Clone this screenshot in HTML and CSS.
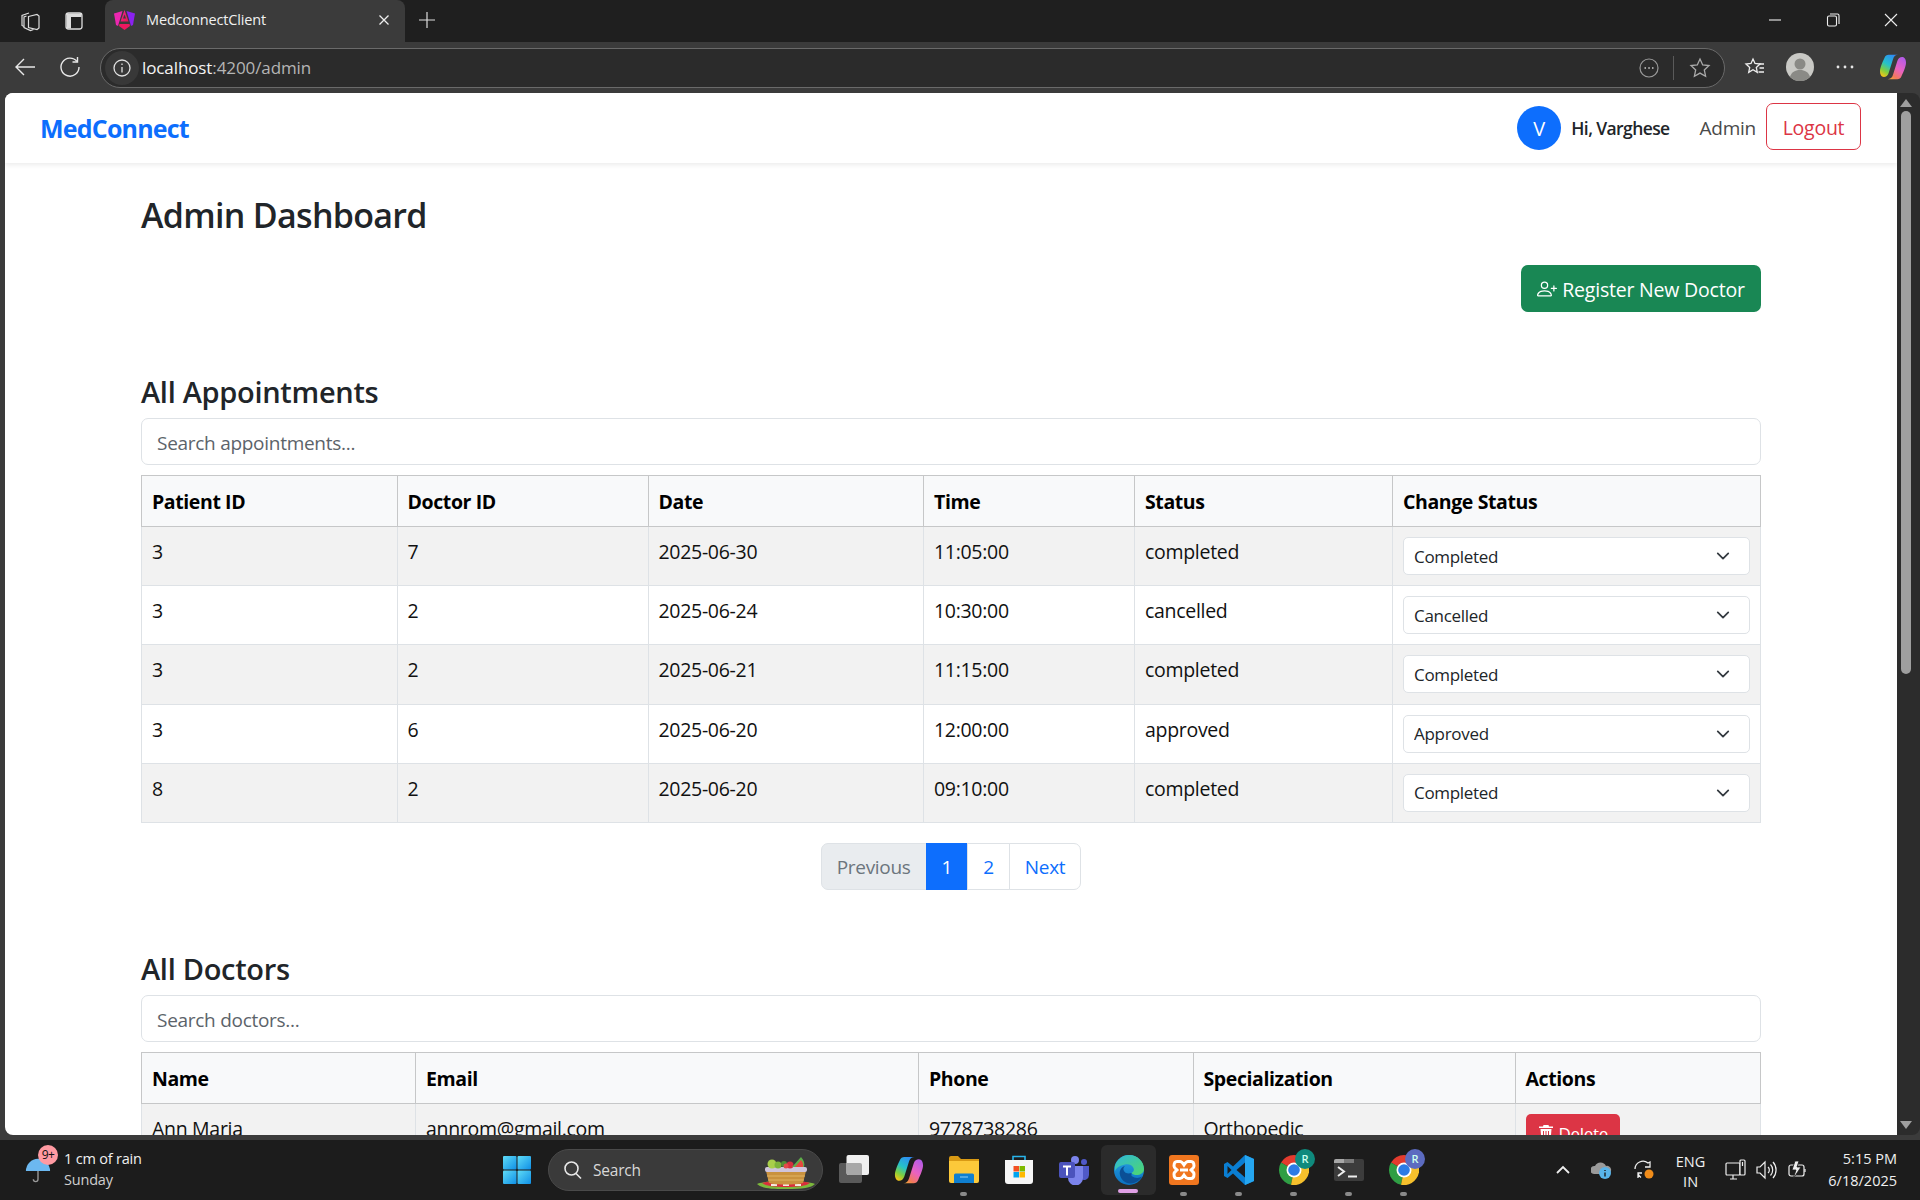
FILE: index.html
```html
<!DOCTYPE html>
<html lang="en">
<head>
<meta charset="utf-8">
<title>MedconnectClient</title>
<link rel="stylesheet" href="styles.css">
</head>
<body>
<div class="titlebar">
  <div class="tb-left">
    <svg class="ic22" viewBox="0 0 22 22" fill="none" stroke="#ddd" stroke-width="1.200"><path d="M9.500 6.500 18 4.500 20 6v12l-2 1.500-8.500-2z"/><path d="M7.500 6 5 7v10.500l6.500 3 3-1"/><path d="M10 3 3 5.500v10l2 1"/></svg>
    <svg class="ic22 vtabs" viewBox="0 0 22 22" fill="none" stroke="#ddd" stroke-width="1.300"><rect x="3" y="3" width="16" height="16" rx="2.500"/><path d="M3.500 3.500h15V7H8v11.500H3.500z" fill="#ddd" stroke="none"/></svg>
  </div>
  <div class="tab">
    <svg class="fav" viewBox="0 0 21 21"><defs><linearGradient id="ang" x1="0" y1="0" x2="1" y2="1"><stop offset="0" stop-color="#f0259a"/><stop offset="1" stop-color="#e8174f"/></linearGradient></defs><path d="M8.500 2 0 4.500 2 16 4 17z" fill="#ec27b0"/><path d="M12.500 2 21 4.500 19 16 17 17z" fill="#8a22f0"/><path d="M10.500 1 14.500 12.500H6.500z" fill="url(#ang)"/><path d="M10.500 5.500 12 9.500H9z" fill="#3b3b3b"/><path d="M5.500 15h10l.5 2-5.500 4-5.500-4z" fill="#ee1860"/></svg>
    <span class="tab-title">MedconnectClient</span>
    <svg class="tab-x" viewBox="0 0 12 12" stroke="#eee" stroke-width="1.300"><path d="M1.500 1.500l9 9M10.500 1.500l-9 9"/></svg>
  </div>
  <svg class="plus" viewBox="0 0 18 18" stroke="#ddd" stroke-width="1.200"><path d="M9 1v16M1 9h16"/></svg>
  <div class="winctl">
    <svg class="ic-win" viewBox="0 0 14 14" stroke="#eee" stroke-width="1.100"><path d="M1 7h12"/></svg>
    <svg class="ic-win" viewBox="0 0 14 14" fill="none" stroke="#eee" stroke-width="1.100"><rect x="1.500" y="3" width="9" height="10" rx="1.500"/><path d="M4 1h7.500a1.500 1.500 0 0 1 1.500 1.500V11"/></svg>
    <svg class="ic-win" viewBox="0 0 14 14" stroke="#eee" stroke-width="1.100"><path d="M1 1l12 12M13 1L1 13"/></svg>
  </div>
</div>

<div class="toolbar">
  <svg class="tool first" viewBox="0 0 22 22" fill="none" stroke="#e8e8e8" stroke-width="1.400"><path d="M21 11H2M10 3l-8 8 8 8"/></svg>
  <svg class="tool" viewBox="0 0 22 22" fill="none" stroke="#e8e8e8" stroke-width="1.400"><path d="M18 5.500A9 9 0 1 0 20 11"/><path d="M18.500 1v5h-5"/></svg>
  <div class="omnibox">
    <span class="info-wrap"><svg class="ic20" viewBox="0 0 20 20" fill="none" stroke="#e0e0e0" stroke-width="1.300"><circle cx="10" cy="10" r="8"/><path d="M10 9v5.500M10 5.500v1.500"/></svg></span>
    <span class="url"><span class="url-host">localhost</span>:4200/admin</span>
    <svg class="ic20 omni-more" viewBox="0 0 20 20" fill="none" stroke="#999" stroke-width="1.200"><circle cx="10" cy="10" r="9"/><path d="M5.500 10h1.500M9.300 10h1.500M13 10h1.500" stroke="#ccc" stroke-width="1.500"/></svg>
    <span class="omni-sep"></span>
    <svg class="ic22" viewBox="0 0 22 22" fill="none" stroke="#aaa" stroke-width="1.300"><path d="M11 2l2.700 5.900 6.300.7-4.700 4.300 1.300 6.300L11 16.100l-5.600 3.100 1.300-6.300L2 8.600l6.300-.7z"/></svg>
  </div>
  <svg class="ic22 fav-list" viewBox="0 0 22 22" fill="none" stroke="#eee" stroke-width="1.300"><path d="M9 3l2 4.500 5 .5-3.700 3.400 1 5L9 13.800 4.700 16.400l1-5L2 8l5-.5z"/><path d="M15 8h5M15.500 12h4.500M14.500 16h5.500"/></svg>
  <svg class="profile" viewBox="0 0 28 28"><circle cx="14" cy="14" r="14" fill="#c9c9c5"/><circle cx="14" cy="11" r="5.500" fill="#8a8a86"/><path d="M4 24c1.500-5 5-7 10-7s8.500 2 10 7a14 14 0 0 1-20 0z" fill="#8a8a86"/></svg>
  <svg class="dots" viewBox="0 0 18 4" fill="#e6e6e6"><circle cx="2" cy="2" r="1.400"/><circle cx="9" cy="2" r="1.400"/><circle cx="16" cy="2" r="1.400"/></svg>
  <svg class="copilot" viewBox="0 0 30 32"><defs><linearGradient id="cpa" x1="0.700" y1="0" x2="0.200" y2="1"><stop offset="0" stop-color="#2f8cf5"/><stop offset=".45" stop-color="#25c2c9"/><stop offset=".75" stop-color="#7fcf3f"/><stop offset="1" stop-color="#f5c518"/></linearGradient><linearGradient id="cpb" x1="0.800" y1="0" x2="0.200" y2="1"><stop offset="0" stop-color="#b25be8"/><stop offset=".5" stop-color="#ea62c0"/><stop offset=".85" stop-color="#f2795a"/><stop offset="1" stop-color="#f0a040"/></linearGradient></defs><path d="M10 2h11c-3 0-5 1.500-6 5L10 23c-1 3-3 4.500-5.500 4.500C1.500 27.500 0 24.500 0 21c0-4 3-11 5-15 1-3 3-4 5-4z" fill="url(#cpa)"/><path d="M20 30H9c3 0 5-1.500 6-5l5-16c1-3 3-4.500 5.500-4.500 3 0 4.500 3 4.500 6.500 0 4-3 11-5 15-1 3-3 4-5 4z" fill="url(#cpb)"/></svg>
</div>

<div class="viewport">
  <div class="page">
    <nav class="navbar">
      <a class="brand">MedConnect</a>
      <div class="nav-right">
        <span class="avatar">V</span>
        <span class="hi">Hi, Varghese</span>
        <span class="role">Admin</span>
        <button class="logout">Logout</button>
      </div>
    </nav>
    <main class="container">
      <h2 class="page-title">Admin Dashboard</h2>
      <div class="actions">
        <button class="btn-green">
          <svg class="person" viewBox="0 0 16 16" fill="currentColor"><path d="M6 8a3 3 0 1 0 0-6 3 3 0 0 0 0 6m2-3a2 2 0 1 1-4 0 2 2 0 0 1 4 0m4 8c0 1-1 1-1 1H1s-1 0-1-1 1-4 6-4 6 3 6 4m-1-.004c-.001-.246-.154-.986-.832-1.664C9.516 10.680 8.289 10 6 10s-3.516.68-4.168 1.332c-.678.678-.83 1.418-.832 1.664z"/><path fill-rule="evenodd" d="M13.500 5a.5.5 0 0 1 .5.5V7h1.500a.5.5 0 0 1 0 1H14v1.500a.5.5 0 0 1-1 0V8h-1.500a.5.5 0 0 1 0-1H13V5.500a.5.5 0 0 1 .5-.5"/></svg>
          Register New Doctor
        </button>
      </div>

      <section class="sec-appts">
        <h3 class="sec-title">All Appointments</h3>
        <input class="search" type="text" placeholder="Search appointments...">
        <table class="tbl">
          <colgroup><col class="a1"><col class="a2"><col class="a3"><col class="a4"><col class="a5"><col class="a6"></colgroup>
          <thead><tr><th>Patient ID</th><th>Doctor ID</th><th>Date</th><th>Time</th><th>Status</th><th>Change Status</th></tr></thead>
          <tbody>
            <tr><td>3</td><td>7</td><td>2025-06-30</td><td>11:05:00</td><td>completed</td><td><select class="sel"><option>Completed</option><option>Cancelled</option><option>Approved</option></select></td></tr>
            <tr><td>3</td><td>2</td><td>2025-06-24</td><td>10:30:00</td><td>cancelled</td><td><select class="sel"><option>Cancelled</option><option>Completed</option><option>Approved</option></select></td></tr>
            <tr><td>3</td><td>2</td><td>2025-06-21</td><td>11:15:00</td><td>completed</td><td><select class="sel"><option>Completed</option><option>Cancelled</option><option>Approved</option></select></td></tr>
            <tr><td>3</td><td>6</td><td>2025-06-20</td><td>12:00:00</td><td>approved</td><td><select class="sel"><option>Approved</option><option>Completed</option><option>Cancelled</option></select></td></tr>
            <tr><td>8</td><td>2</td><td>2025-06-20</td><td>09:10:00</td><td>completed</td><td><select class="sel"><option>Completed</option><option>Cancelled</option><option>Approved</option></select></td></tr>
          </tbody>
        </table>
        <ul class="pager">
          <li class="pg disabled">Previous</li>
          <li class="pg active">1</li>
          <li class="pg">2</li>
          <li class="pg">Next</li>
        </ul>
      </section>

      <section class="sec-docs">
        <h3 class="sec-title">All Doctors</h3>
        <input class="search" type="text" placeholder="Search doctors...">
        <table class="tbl">
          <colgroup><col class="d1"><col class="d2"><col class="d3"><col class="d4"><col class="d5"></colgroup>
          <thead><tr><th>Name</th><th>Email</th><th>Phone</th><th>Specialization</th><th>Actions</th></tr></thead>
          <tbody>
            <tr><td>Ann Maria</td><td>annrom@gmail.com</td><td>9778738286</td><td>Orthopedic</td><td><button class="btn-del"><svg class="trash" viewBox="0 0 16 16" fill="currentColor"><path d="M5.500 0h5l.5 1.500h4V3H1V1.500h4zM2.500 4h11l-1 12h-9zM5 6v8h1V6zm2.500 0v8h1V6zM10 6v8h1V6z"/></svg> Delete</button></td></tr>
          </tbody>
        </table>
      </section>
    </main>
  </div>
  <div class="scrollbar">
    <span class="sb-up"></span>
    <span class="sb-thumb"></span>
    <span class="sb-down"></span>
  </div>
</div>

<footer class="taskbar">
  <div class="weather">
    <svg class="umbrella" viewBox="0 0 28 30"><path d="M1 16a13 13 0 0 1 26 0z" fill="#6cb8f0"/><path d="M14 16v9a2.500 2.500 0 0 1-5 0" fill="none" stroke="#999" stroke-width="1.500"/></svg>
    <span class="badge">9+</span>
    <div class="weather-text"><span>1 cm of rain</span><span class="w-sub">Sunday</span></div>
  </div>
  <svg class="start" viewBox="0 0 28 28"><defs><linearGradient id="win" x1="0" y1="0" x2="1" y2="1"><stop offset="0" stop-color="#5fdcf7"/><stop offset="1" stop-color="#0f8fe6"/></linearGradient></defs><rect x="0" y="0" width="13.500" height="13.500" rx="1" fill="url(#win)"/><rect x="14.500" y="0" width="13.500" height="13.500" rx="1" fill="url(#win)"/><rect x="0" y="14.500" width="13.500" height="13.500" rx="1" fill="url(#win)"/><rect x="14.500" y="14.500" width="13.500" height="13.500" rx="1" fill="url(#win)"/></svg>
  <div class="tb-search">
    <svg class="ic20" viewBox="0 0 20 20" fill="none" stroke="#e8e8e8" stroke-width="1.600"><circle cx="8.500" cy="8.500" r="6.500"/><path d="M13 13.500l5 5"/></svg>
    <span class="tb-search-text">Search</span>
    <svg class="basket" viewBox="0 0 58 32"><path d="M0 27c6-4 50-4 58 0-4 4-12 5-29 5S4 31 0 27z" fill="#7cb83c"/><path d="M5 26c8-3 40-3 48 0-4 3-12 4-24 4S9 29 5 26z" fill="#d82f3c"/><path d="M14 27h6v2h-6zM26 27h6v2h-6zM38 27h6v2h-6z" fill="#f6e6e0"/><path d="M9 14h40l-3 12c-6 2-28 2-34 0z" fill="#c9923f"/><path d="M10 19h38M11 23h36" stroke="#e2b565" stroke-width="1"/><rect x="8" y="10" width="42" height="5" rx="2" fill="#cfc4dc"/><circle cx="15" cy="7" r="4.500" fill="#a9cf4a"/><circle cx="21" cy="8" r="3.500" fill="#7db33a"/><circle cx="27" cy="7" r="3" fill="#4f8f36"/><circle cx="33" cy="8" r="3.500" fill="#d5303f"/><circle cx="29" cy="9" r="2.500" fill="#e24a4a"/><path d="M35 10 44 0c3 3 4 7 3 10z" fill="#5fae4a"/><path d="M38 10 44 3c2 2 2.500 5 2 7z" fill="#e4483e"/></svg>
  </div>
  <div class="apps">
    <span class="app"><svg class="ai" viewBox="0 0 30 30"><rect x="0" y="8" width="23" height="20" rx="2" fill="#5a5a5a"/><rect x="7.500" y="0" width="22.500" height="20" rx="2" fill="#f0f0f0"/><path d="M7.500 8H21a2 2 0 0 1 2 2v10H9.500a2 2 0 0 1-2-2z" fill="#a8a8a8"/></svg></span>
    <span class="app"><svg class="ai" viewBox="0 0 30 32"><defs><linearGradient id="cpc" x1="0.700" y1="0" x2="0.200" y2="1"><stop offset="0" stop-color="#2f8cf5"/><stop offset=".45" stop-color="#25c2c9"/><stop offset=".75" stop-color="#7fcf3f"/><stop offset="1" stop-color="#f5c518"/></linearGradient><linearGradient id="cpd" x1="0.800" y1="0" x2="0.200" y2="1"><stop offset="0" stop-color="#b25be8"/><stop offset=".5" stop-color="#ea62c0"/><stop offset=".85" stop-color="#f2795a"/><stop offset="1" stop-color="#f0a040"/></linearGradient></defs><path d="M10 2h11c-3 0-5 1.500-6 5L10 23c-1 3-3 4.500-5.500 4.500C1.500 27.500 0 24.500 0 21c0-4 3-11 5-15 1-3 3-4 5-4z" fill="url(#cpc)"/><path d="M20 30H9c3 0 5-1.500 6-5l5-16c1-3 3-4.500 5.500-4.500 3 0 4.500 3 4.500 6.500 0 4-3 11-5 15-1 3-3 4-5 4z" fill="url(#cpd)"/></svg></span>
    <span class="app running"><svg class="ai" viewBox="0 0 30 30"><path d="M0 3a2 2 0 0 1 2-2h7l3 3h18v6H0z" fill="#d99a14"/><path d="M0 6h30v20a2 2 0 0 1-2 2H2a2 2 0 0 1-2-2z" fill="#fcc93a"/><path d="M5 20a1.500 1.500 0 0 1 1.500-1.500h17A1.500 1.500 0 0 1 25 20v8H5z" fill="#0f7fd0"/><path d="M11 22h8" stroke="#8fd0f5" stroke-width="1"/></svg></span>
    <span class="app"><svg class="ai" viewBox="0 0 30 30"><path d="M9 6V1.500h12V6" fill="none" stroke="#28b4ea" stroke-width="1.600"/><path d="M1 5h28v21a3 3 0 0 1-3 3H4a3 3 0 0 1-3-3z" fill="#f6f6f6"/><rect x="9.500" y="11" width="5.500" height="5.500" fill="#f25022"/><rect x="15.500" y="11" width="5.500" height="5.500" fill="#7fba00"/><rect x="9.500" y="17" width="5.500" height="5.500" fill="#00a4ef"/><rect x="15.500" y="17" width="5.500" height="5.500" fill="#ffb900"/></svg></span>
    <span class="app"><svg class="ai" viewBox="0 0 30 30"><circle cx="16" cy="5" r="4" fill="#7b83eb"/><circle cx="25" cy="7" r="3" fill="#5059c9"/><path d="M20 11h10v9a5 5 0 0 1-8 4z" fill="#5059c9"/><path d="M9 11h15v12a7.500 7.500 0 0 1-15 0z" fill="#7b83eb"/><rect x="0" y="7" width="16" height="16" rx="2" fill="#4b53bc"/><path d="M4 10.500h8v2H9v8H7v-8H4z" fill="#fff"/></svg></span>
    <span class="app edge"><svg class="ai" viewBox="0 0 30 30"><defs><linearGradient id="edg" x1="0" y1="0" x2="1" y2="1"><stop offset="0" stop-color="#2fb8d8"/><stop offset="1" stop-color="#4fd86c"/></linearGradient><linearGradient id="edb" x1="0" y1="0" x2="0" y2="1"><stop offset="0" stop-color="#2aa5e5"/><stop offset="1" stop-color="#0a70c0"/></linearGradient></defs><circle cx="15" cy="15" r="15" fill="url(#edb)"/><path d="M1 11C3 4 9 0 15 0c9 0 15 7 15 14 0 4-4 6-7.500 6-2 0-4-.5-5-2 2-1 3-3 2-5-1-3-5-4.500-8.500-3.500C6 10.500 3 12 1 16z" fill="url(#edg)"/><path d="M17.500 18c-3 1-7 .5-8-3-.5-1.500.5-3 1.500-4-4 1-6 5-5 9 1 5 6 9 11 8.500 5-.5 9-3 11-7-3 2-7 2-10.500-.5z" fill="#0b4f96"/></svg><i class="edge-bar"></i></span>
    <span class="app running"><svg class="ai" viewBox="0 0 30 30"><rect x="0" y="0" width="30" height="30" rx="3" fill="#f0761f"/><path d="M8 6.500h3c2 0 3 2 4 3.500 1-1.500 2-3.500 4-3.500h3c2.500 0 3 2.500 3 4.500s-2 3-3 4c1 1 3 2 3 4s-.5 4.500-3 4.500h-3c-2 0-3-2-4-3.500-1 1.500-2 3.500-4 3.500H8c-2.500 0-3-2.500-3-4.500s2-3 3-4c-1-1-3-2-3-4s.5-4.500 3-4.500z" fill="none" stroke="#fff" stroke-width="3"/><path d="M11 15h8" stroke="#fff" stroke-width="3"/></svg></span>
    <span class="app running"><svg class="ai" viewBox="0 0 30 30"><path d="M21 0l9 4v22l-9 4L9 18.500 3.500 23 0 21V9l3.500-2L9 11.500z" fill="#0a7ed2"/><path d="M21 0l9 4v22l-9 4z" fill="#25a6f0"/><path d="M21 7.500 12.500 15l8.500 7.500z" fill="#1c1c1c"/><path d="M3.500 11v8l4-4z" fill="#1c1c1c"/></svg></span>
    <span class="app running"><svg class="ai" viewBox="0 0 30 30"><path d="M15 15 2.010 7.500A15 15 0 0 1 27.990 7.500z" fill="#e33b2e"/><path d="M15 15 12 29.700A15 15 0 0 1 2.010 7.500z" fill="#2f9e44"/><path d="M15 15 27.990 7.500A15 15 0 0 1 12 29.700z" fill="#f6c02c"/><circle cx="15" cy="15" r="7.500" fill="#fff"/><circle cx="15" cy="15" r="5.800" fill="#2c7be5"/></svg><span class="mini teal">R</span></span>
    <span class="app running"><svg class="ai" viewBox="0 0 30 30"><rect x="0" y="4" width="30" height="22" rx="2" fill="#3c3c3c"/><path d="M0 6a2 2 0 0 1 2-2h8v4H0z" fill="#a8a8a8"/><path d="M10 4h10v4H10z" fill="#7a7a7a"/><path d="M4 12l6 4.500-6 4.500" fill="none" stroke="#eee" stroke-width="2"/><path d="M14 21.500h9" stroke="#eee" stroke-width="2"/></svg></span>
    <span class="app running"><svg class="ai" viewBox="0 0 30 30"><path d="M15 15 2.010 7.500A15 15 0 0 1 27.990 7.500z" fill="#e33b2e"/><path d="M15 15 12 29.700A15 15 0 0 1 2.010 7.500z" fill="#2f9e44"/><path d="M15 15 27.990 7.500A15 15 0 0 1 12 29.700z" fill="#f6c02c"/><circle cx="15" cy="15" r="7.500" fill="#fff"/><circle cx="15" cy="15" r="5.800" fill="#2c7be5"/></svg><span class="mini indigo">R</span></span>
  </div>
  <div class="tray">
    <svg class="tr16" viewBox="0 0 16 16" fill="none" stroke="#eee" stroke-width="1.800"><path d="M2 11l6-6 6 6"/></svg>
    <svg class="tr22" viewBox="0 0 22 22"><path d="M3 15a4 4 0 0 1 1-8 6 6 0 0 1 11 0 4 4 0 0 1 2 8z" fill="#9a9a9a"/><circle cx="14" cy="14" r="6" fill="#58b4ea"/><path d="M14 11v1M14 13.500v4" stroke="#1c1c1c" stroke-width="1.400"/></svg>
    <svg class="tr22" viewBox="0 0 22 22" fill="none" stroke="#eee" stroke-width="1.300"><path d="M2 10a8 8 0 0 1 13-6l2-1v5h-5"/><path d="M5 19v-5h4M5 14.500a8 8 0 0 0 3 4"/><circle cx="16" cy="15" r="4.500" fill="#f08c1a" stroke="none"/></svg>
    <div class="lang"><span>ENG</span><span>IN</span></div>
    <svg class="tr22" viewBox="0 0 22 22" fill="none" stroke="#eee" stroke-width="1.200"><rect x="1" y="4" width="14" height="12" rx="1"/><path d="M5 20h7M8 16v4"/><rect x="15" y="1" width="5" height="15" rx="1" fill="#1c1c1c"/><path d="M17.500 3v4"/></svg>
    <svg class="tr22" viewBox="0 0 22 22" fill="none" stroke="#eee" stroke-width="1.200"><path d="M2 8h3l5-5v16l-5-5H2z"/><path d="M13 8a4 4 0 0 1 0 6M15.500 5.500a8 8 0 0 1 0 11M18 3a12 12 0 0 1 0 16"/></svg>
    <svg class="tr22" viewBox="0 0 22 22" fill="none" stroke="#eee" stroke-width="1.200"><rect x="3" y="6" width="15" height="11" rx="2"/><path d="M19 10v3"/><path d="M9 2 6 11h4l-3 9 8-12h-4l2-6z" fill="#eee" stroke="#1c1c1c" stroke-width=".8"/></svg>
    <div class="clock"><span>5:15 PM</span><span>6/18/2025</span></div>
  </div>
</footer>
</body>
</html>
```
FILE: styles.css
```css
* { box-sizing: border-box; }
html, body { margin: 0; height: 100%; }
body {
  width: 1920px;
  height: 1200px;
  overflow: hidden;
  display: flex;
  flex-direction: column;
  background: #3b3b3b;
  font-family: "Open Sans", "Noto Sans", sans-serif;
  color: #212529;
}
svg { display: block; flex: none; }
.ic20 { width: 20px; height: 20px; }
.ic22 { width: 22px; height: 22px; }

/* browser title bar */
.titlebar {
  height: 42px;
  flex: none;
  background: #1f1f1f;
  display: flex;
  align-items: stretch;
  position: relative;
}
.tb-left { width: 105px; display: flex; align-items: center; gap: 22px; padding-left: 19px; }
.tab {
  width: 300px;
  background: #3b3b3b;
  border-radius: 8px 8px 0 0;
  display: flex;
  align-items: center;
  padding: 0 15px 3px 9px;
}
.fav { width: 21px; height: 21px; }
.tab-title { margin-left: 11px; flex: 1; font: 14.500px "Open Sans", sans-serif; letter-spacing: -.15px; color: #f0f0f0; }
.tab-x { width: 12px; height: 12px; }
.plus { width: 18px; height: 18px; margin: 11px 0 0 13px; }
.winctl { margin-left: auto; display: flex; align-items: center; padding-right: 22px; gap: 44px; padding-bottom: 2px; }
.ic-win { width: 14px; height: 14px; }

/* browser toolbar */
.toolbar { height: 51px; flex: none; display: flex; align-items: center; padding: 0 0 2px; }
.tool { width: 22px; height: 22px; }
.first { margin: 0 23px 0 14px; }
.omnibox {
  margin: 2px 0 0 19px;
  width: 1625px;
  height: 40px;
  background: #2b2b2b;
  border: 1px solid #6a6a6a;
  border-radius: 20px;
  display: flex;
  align-items: center;
  padding: 0 13px 0 4px;
}
.info-wrap { width: 34px; height: 34px; border-radius: 50%; background: #383838; display: flex; align-items: center; justify-content: center; }
.url { margin-left: 3px; flex: 1; font: 17px "Open Sans", sans-serif; letter-spacing: -.1px; color: #b5b5b5; }
.url-host { color: #f4f4f4; }
.omni-more { margin-right: 14px; }
.omni-sep { width: 1px; height: 24px; background: #5a5a5a; margin-right: 15px; }
.fav-list { margin-left: 19px; }
.profile { width: 28px; height: 28px; margin-left: 20px; }
.dots { width: 18px; height: 4px; margin-left: 22px; }
.copilot { width: 26px; height: 28px; margin-left: 26px; }

/* viewport */
.viewport { height: 1042px; flex: none; display: flex; padding-left: 5px; }
.page {
  width: 1892px;
  height: 1042px;
  background: #fff;
  border-radius: 8px 0 0 8px;
  overflow: hidden;
}
.scrollbar { width: 23px; background: #2c2c2c; display: flex; flex-direction: column; align-items: flex-start; padding: 6px 0 6px 3px; border-radius: 0 8px 8px 0; }
.sb-up { width: 0; height: 0; border-left: 6px solid transparent; border-right: 6px solid transparent; border-bottom: 8px solid #9f9f9f; margin-bottom: 4px; }
.sb-thumb { width: 10px; height: 563px; background: #9f9f9f; border-radius: 5px; margin-left: 1px; }
.sb-down { width: 0; height: 0; border-left: 6px solid transparent; border-right: 6px solid transparent; border-top: 8px solid #9f9f9f; margin-top: auto; }

/* app navbar */
.navbar {
  height: 70px;
  background: #fff;
  display: flex;
  align-items: center;
  justify-content: space-between;
  padding: 0 36px 0 35px;
  box-shadow: 0 2px 5px rgba(0,0,0,.08);
  position: relative;
}
.brand { font-size: 25px; font-weight: 700; color: #0d6efd; letter-spacing: -.8px; }
.nav-right { display: flex; align-items: center; }
.avatar { width: 44px; height: 44px; border-radius: 50%; background: #0d6efd; color: #fff; display: flex; align-items: center; justify-content: center; font-size: 20px; }
.hi { margin-left: 10px; font-size: 17.500px; font-weight: 600; letter-spacing: -.6px; }
.role { margin-left: 30px; font-size: 19px; color: #4a4a4a; letter-spacing: -.25px; }
.logout { margin: 0 0 3px 10px; width: 95px; height: 47px; background: #fff; border: 1px solid #dc3545; border-radius: 7px; color: #dc3545; font: 19.500px "Open Sans", sans-serif; letter-spacing: -.25px; padding: 2px 0 0; }

/* content */
.container { width: 1620px; margin: 0 auto; padding-top: 28px; font-size: 19px; letter-spacing: -.3px; }
.page-title { margin: 0; font-size: 34px; font-weight: 600; line-height: 48px; color: #212529; letter-spacing: -.7px; }
.actions { display: flex; justify-content: flex-end; margin-top: 26px; }
.btn-green { display: flex; align-items: center; gap: 5px; width: 240px; height: 47px; justify-content: center; border: 0; border-radius: 7px; background: #198754; color: #fff; font: 19.500px "Open Sans", sans-serif; letter-spacing: -.2px; padding: 1px 0 0; }
.person { width: 20px; height: 20px; }
.sec-appts { margin-top: 59px; }
.sec-docs { margin-top: 58.500px; }
.sec-title { margin: 0 0 5px; font-size: 29px; font-weight: 600; line-height: 42px; letter-spacing: -.3px; }
.search { display: block; width: 100%; height: 47px; padding: 2px 15px 0; border: 1px solid #dee2e6; border-radius: 7px; font: 19px "Open Sans", sans-serif; letter-spacing: -.28px; color: #212529; }
.search::placeholder { color: #5c636a; opacity: 1; }

.tbl { margin-top: 10px; width: 1619px; table-layout: fixed; border-collapse: collapse; color: #111; }
.tbl th { background: #f8f9fa; border: 1px solid #c6c7c8; padding: 1px 10px 0; height: 51px; text-align: left; font-weight: 700; font-size: 19.500px; color: #000; letter-spacing: -.4px; }
.tbl td { border: 1px solid #dee2e6; padding: 11px 10px 9px; height: 59.200px; vertical-align: top; font-size: 19.500px; }
.tbl td:last-child { padding-top: 10px; }
.tbl tbody tr:nth-child(odd) td { background: #f2f2f2; }
.a1 { width: 255.500px; } .a2 { width: 251px; } .a3 { width: 275.500px; } .a4 { width: 211px; } .a5 { width: 258px; } .a6 { width: 368px; }
.d1 { width: 274px; } .d2 { width: 503px; } .d3 { width: 274.500px; } .d4 { width: 322px; } .d5 { width: 245.500px; }
.sel {
  display: block;
  width: 100%;
  height: 38px;
  padding: 0 40px 0 10px;
  border: 1px solid #dee2e6;
  border-radius: 5px;
  appearance: none;
  background: #fff url("data:image/svg+xml,%3csvg xmlns='http://www.w3.org/2000/svg' viewBox='0 0 16 16'%3e%3cpath fill='none' stroke='%23343a40' stroke-linecap='round' stroke-linejoin='round' stroke-width='2' d='m2 5 6 6 6-6'/%3e%3c/svg%3e") no-repeat right 17px center / 18px 14px;
  font: 17px "Open Sans", sans-serif;
  letter-spacing: -.3px;
  color: #212529;
}

.pager { list-style: none; margin: 20px auto 0; padding: 0; display: flex; width: max-content; }
.pg { height: 47px; padding: 2px 15px 0; display: flex; align-items: center; background: #fff; border: 1px solid #dee2e6; margin-left: -1px; color: #0d6efd; }
.pg:first-child { margin-left: 0; border-radius: 7px 0 0 7px; }
.pg:last-child { border-radius: 0 7px 7px 0; }
.pg.disabled { background: #e9ecef; color: #6c757d; }
.pg.active { background: #0d6efd; border-color: #0d6efd; color: #fff; }

.btn-del { display: inline-flex; align-items: center; gap: 5px; height: 38px; padding: 0 12px; border: 0; border-radius: 5px; background: #dc3545; color: #fff; font: 17px "Open Sans", sans-serif; letter-spacing: -.3px; }
.trash { width: 16px; height: 16px; }

/* windows taskbar */
.taskbar {
  flex: none;
  height: 60px;
  margin-top: 5px;
  background: #1c1c1c;
  display: flex;
  align-items: center;
  color: #f0f0f0;
  position: relative;
}
.weather { width: 503px; display: flex; align-items: center; position: relative; padding-left: 25px; }
.umbrella { width: 26px; height: 30px; }
.badge { position: absolute; left: 38px; top: -6px; width: 20px; height: 20px; border-radius: 50%; background: #ff9aa2; color: #111; font-size: 12px; text-align: center; line-height: 20px; letter-spacing: -.5px; }
.weather-text { margin-left: 13px; display: flex; flex-direction: column; gap: 3px; font-size: 14.500px; line-height: 18px; letter-spacing: -.2px; margin-top: -1px; }
.w-sub { color: #cfcfcf; }
.start { width: 28px; height: 28px; }
.tb-search {
  margin-left: 17px;
  width: 275px;
  height: 42px;
  border-radius: 21px;
  background: #3a3a3a;
  border: 1px solid #4a4a4a;
  display: flex;
  align-items: center;
  padding: 0 7px 0 14px;
}
.tb-search-text { margin-left: 10px; flex: 1; font-size: 15.500px; color: #d8d8d8; letter-spacing: -.2px; }
.basket { width: 58px; height: 32px; margin-top: 6px; }
.apps { display: flex; margin-left: 3px; }
.app { width: 55px; height: 50px; display: flex; align-items: center; justify-content: center; position: relative; }
.ai { width: 30px; height: 30px; }
.running::after { content: ""; position: absolute; left: 50%; margin-left: -3.500px; bottom: -1px; width: 7px; height: 4px; border-radius: 2px; background: #8a8a8a; }
.edge { background: #2b2b2b; border-radius: 6px; }
.edge-bar { position: absolute; left: 17px; bottom: 2px; width: 20px; height: 4px; border-radius: 2px; background: #e0a0e6; }
.mini { position: absolute; right: 6px; top: 4px; width: 20px; height: 20px; border-radius: 50%; color: #cfe; font-size: 11px; font-weight: 600; text-align: center; line-height: 20px; }
.teal { background: #0f8a7d; }
.indigo { background: #5c6bc0; }
.tray { margin-left: auto; display: flex; align-items: center; padding-right: 23px; }
.tr16 { width: 16px; height: 16px; }
.tr22 { width: 22px; height: 22px; }
.tray .tr16 + .tr22 { margin-left: 20px; }
.tr22 + .tr22 { margin-left: 20px; }
.lang { margin: 3px 20px 0 21px; display: flex; flex-direction: column; align-items: center; gap: 2px; font-size: 14.500px; line-height: 18px; }
.lang + .tr22 + .tr22 { margin-left: 8px; }
.lang + .tr22 + .tr22 + .tr22 { margin-left: 9px; }
.clock { margin: -1px 0 0 20px; display: flex; flex-direction: column; align-items: flex-end; gap: 4px; font-size: 14.500px; line-height: 18px; letter-spacing: 0; }
```
